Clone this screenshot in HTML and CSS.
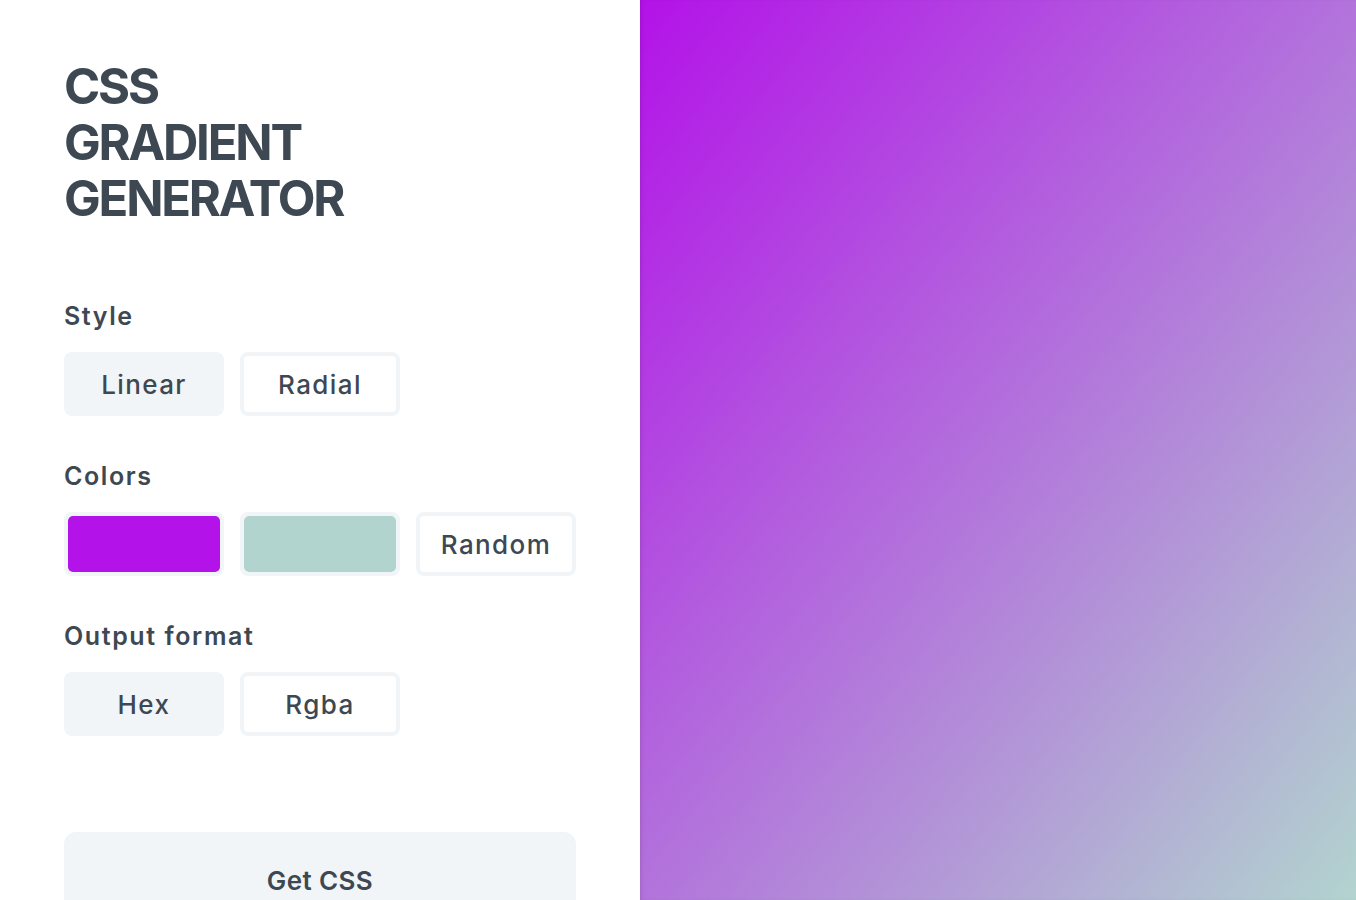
FILE: index.html
```html
<!DOCTYPE html>
<html lang="en">
<head>
<meta charset="utf-8">
<title>CSS Gradient Generator</title>
<link rel="stylesheet" href="styles.css">
</head>
<body>
<div class="app">
  <aside class="panel">
    <h1 class="title">CSS<br>GRADIENT<br>GENERATOR</h1>

    <section class="group group-first">
      <h2 class="label">Style</h2>
      <div class="row">
        <button class="btn btn-active">Linear</button>
        <button class="btn">Radial</button>
      </div>
    </section>

    <section class="group">
      <h2 class="label">Colors</h2>
      <div class="row">
        <div class="swatch"><span class="swatch-fill swatch-a"></span></div>
        <div class="swatch"><span class="swatch-fill swatch-b"></span></div>
        <button class="btn">Random</button>
      </div>
    </section>

    <section class="group">
      <h2 class="label">Output format</h2>
      <div class="row">
        <button class="btn btn-active">Hex</button>
        <button class="btn">Rgba</button>
      </div>
    </section>

    <button class="get-css">Get CSS</button>
  </aside>
  <main class="preview"></main>
</div>
</body>
</html>
```

FILE: styles.css
```css
* { box-sizing: border-box; }
html, body { margin: 0; padding: 0; height: 100%; overflow: hidden; }
body {
  font-family: Inter, "Open Sans", "Liberation Sans", sans-serif;
  color: #3d4852;
  background: #fff;
}
.app {
  display: flex;
  height: 900px;
}
.panel {
  width: 640px;
  flex: 0 0 640px;
  padding: 59px 64px 0 64px;
  display: flex;
  flex-direction: column;
}
.title {
  margin: 0;
  font-size: 49px;
  line-height: 56px;
  font-weight: 700;
  letter-spacing: -2.2px;
  color: #3d4852;
}
.group { margin-top: 44px; }
.group-first { margin-top: 73px; }
.label {
  margin: 0 0 20px 0;
  font-size: 25px;
  line-height: 32px;
  font-weight: 600;
  color: #3d4852;
  letter-spacing: 1.6px;
}
.row {
  display: flex;
  gap: 16px;
}
.btn {
  width: 160px;
  height: 64px;
  border: 4px solid #f1f5f8;
  border-radius: 8px;
  background: #fff;
  font-family: inherit;
  font-size: 26px;
  font-weight: 500;
  color: #3d4852;
  padding: 0;
  letter-spacing: 1.4px;
}
.btn-active {
  background: #f1f5f8;
}
.swatch {
  width: 160px;
  height: 64px;
  border: 4px solid #f1f5f8;
  border-radius: 8px;
  display: flex;
}
.swatch-fill {
  flex: 1;
  border-radius: 5px;
}
.swatch-a { background: #b312e8; }
.swatch-b { background: #b2d4cf; }
.get-css {
  margin-top: 96px;
  width: 512px;
  height: 96px;
  flex: 0 0 96px;
  border: 0;
  border-radius: 12px;
  background: #f1f5f8;
  font-family: inherit;
  font-size: 26px;
  font-weight: 600;
  color: #3d4852;
  letter-spacing: 0.4px;
}
.preview {
  flex: 1;
  height: 900px;
  background: linear-gradient(to bottom right, #b312e8, #b2d4cf);
  box-shadow: inset 3px 0 4px -2px rgba(0, 0, 0, 0.12);
}
```
